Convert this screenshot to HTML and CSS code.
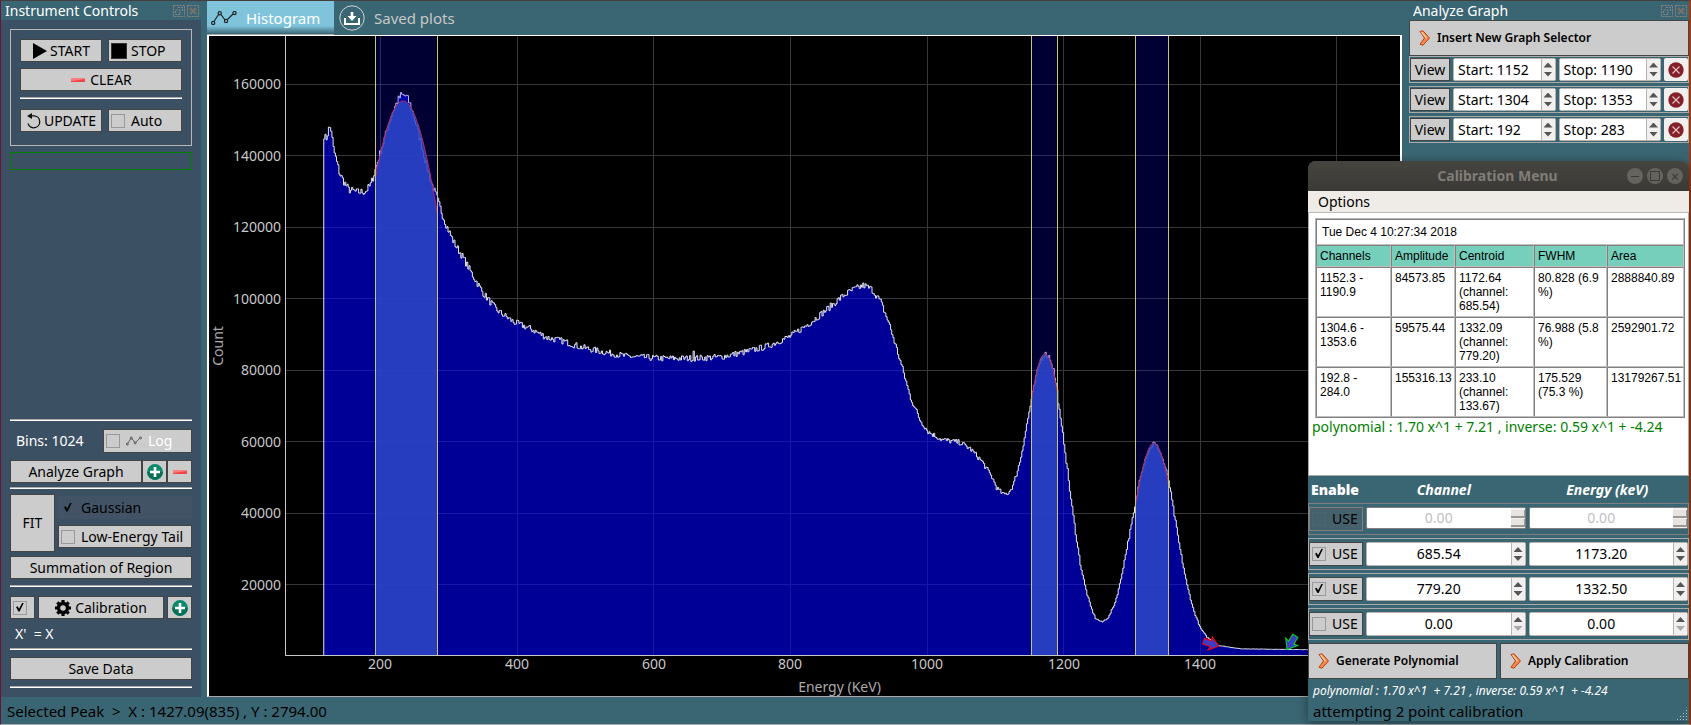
FILE: index.html
```
<!DOCTYPE html>
<html lang="en">
	<head>
		<meta charset="utf-8">
		<title>Histogram</title>
		<link rel="stylesheet" href="styles.css">
	</head>
	<body>
		<!-- icon sheet -->
		<svg class="sheet">
			<symbol id="i-play" viewBox="0 0 16 16"><path d="M1 0L15 8L1 16Z" fill="#000"/></symbol>
			<symbol id="i-stop" viewBox="0 0 16 16"><rect x="0.5" y="0.5" width="15" height="15" fill="#000" stroke="#333"/></symbol>
			<symbol id="i-minus" viewBox="0 0 16 16"><rect x="1" y="6" width="14" height="4" fill="#f04848"/><path d="M1 6H15V7L1 9Z" fill="#f98080"/></symbol>
			<symbol id="i-undo" viewBox="0 0 16 16"><path d="M5 2.8H8.5A6 6 0 1 1 2 10.5" fill="none" stroke="#111" stroke-width="1.3"/><path d="M6 0V6L1 3Z" fill="#111"/></symbol>
			<symbol id="i-plus" viewBox="0 0 16 16"><circle cx="8" cy="8" r="7.9" fill="#0b8a6b"/><path d="M0.1 8A7.9 7.9 0 0 0 15.9 8Z" fill="#087058"/><path d="M8 3V13M3 8H13" stroke="#fff" stroke-width="2.6"/></symbol>
			<symbol id="i-gear" viewBox="0 0 16 16"><circle cx="8" cy="8" r="4.5" fill="none" stroke="#000" stroke-width="3.4"/><path d="M8 0V3M8 13V16M0 8H3M13 8H16M2.3 2.3L4.4 4.4M11.6 11.6L13.7 13.7M2.3 13.7L4.4 11.6M11.6 4.4L13.7 2.3" stroke="#000" stroke-width="3.2"/></symbol>
			<symbol id="i-line" viewBox="0 0 26 14"><g fill="none" stroke="currentColor" stroke-width="1.2"><path d="M3 10.5L7.5 3.5M10 3.5L14 9M16.5 8.5L22 3"/><circle cx="2.2" cy="12" r="1.6"/><circle cx="8.7" cy="2.2" r="1.6"/><circle cx="15" cy="10" r="1.6"/><circle cx="23.5" cy="2" r="1.6"/></g></symbol>
			<symbol id="i-save" viewBox="0 0 26 26"><circle cx="13" cy="13" r="12.2" fill="none" stroke="#c8d6da"/><path d="M6 13V19H20V13" fill="none" stroke="#fff" stroke-width="2"/><path d="M11.7 7H14.3V11H17.5L13 16L8.5 11H11.7Z" fill="#fff"/></symbol>
			<symbol id="i-chevron" viewBox="0 0 12 16"><path d="M1 1.5L4 0.8L10.5 8L4 15.2L1 14.2L5.5 8Z" fill="#f58a4c" stroke="#c03c10"/><path d="M2.5 2L7.5 8" stroke="#fcd2a8" stroke-width="1.2"/></symbol>
			<symbol id="i-remove" viewBox="0 0 16 16"><circle cx="8" cy="8" r="7.7" fill="#842029"/><path d="M4.5 4.5L11.5 11.5M11.5 4.5L4.5 11.5" stroke="#e6c4c6" stroke-width="1.1"/></symbol>
			<symbol id="i-float" viewBox="0 0 12 12"><g fill="none" stroke="#8a8782" stroke-dasharray="2 1"><rect x="0.5" y="0.5" width="11" height="11"/><path d="M5 2.5H9.5V7M2.5 5H7V9.5H2.5Z"/></g></symbol>
			<symbol id="i-shut" viewBox="0 0 12 12"><rect x="0.5" y="0.5" width="11" height="11" fill="none" stroke="#8a8782" stroke-dasharray="2 1"/><path d="M3 3L9 9M9 3L3 9" stroke="#77716c" stroke-width="2.4"/></symbol>
		</svg>

		<div class="app">
			<div class="main">
				<aside class="dock controls">
					<header class="dock-title">
						<span>Instrument Controls</span>
						<button aria-label="Float"><svg><use href="#i-float"/></svg></button>
						<button aria-label="Close"><svg><use href="#i-shut"/></svg></button>
					</header>
					<div class="controls-body">
						<div class="box">
							<div class="row">
								<button class="btn half"><svg class="icon"><use href="#i-play"/></svg>START</button>
								<button class="btn stop"><svg class="icon"><use href="#i-stop"/></svg>STOP</button>
							</div>
							<button class="btn"><svg class="icon"><use href="#i-minus"/></svg>CLEAR</button>
							<hr>
							<div class="row update">
								<button class="btn half"><svg class="icon"><use href="#i-undo"/></svg>UPDATE</button>
								<label class="btn check"><input type="checkbox">Auto</label>
							</div>
						</div>
						<div class="progress"></div>

						<div class="lower">
							<hr>
							<div class="row bins">
								<span>Bins: 1024</span>
								<label class="btn check log"><input type="checkbox"><svg class="icon"><use href="#i-line"/></svg>Log</label>
							</div>
							<div class="row tight">
								<button class="btn">Analyze Graph</button>
								<button class="btn square" aria-label="Add region"><svg class="icon"><use href="#i-plus"/></svg></button>
								<button class="btn square" aria-label="Remove region"><svg class="icon"><use href="#i-minus"/></svg></button>
							</div>
							<hr>
							<div class="row fit">
								<button class="btn">FIT</button>
								<div class="stack">
									<label class="btn check off"><input type="checkbox" checked disabled>Gaussian</label>
									<label class="btn check"><input type="checkbox">Low-Energy Tail</label>
								</div>
							</div>
							<button class="btn">Summation of Region</button>
							<hr>
							<div class="row calib">
								<label class="btn check square"><input type="checkbox" checked aria-label="Use calibration"></label>
								<button class="btn"><svg class="icon"><use href="#i-gear"/></svg>Calibration</button>
								<button class="btn square" aria-label="Add calibration"><svg class="icon"><use href="#i-plus"/></svg></button>
							</div>
							<div class="formula">X' &nbsp;= X</div>
							<hr>
							<button class="btn">Save Data</button>
							<hr>
						</div>
					</div>
				</aside>

				<section class="center">
					<nav class="tabs">
						<button class="tab active"><svg class="line"><use href="#i-line"/></svg>Histogram</button>
						<button class="tab"><svg class="save"><use href="#i-save"/></svg>Saved plots</button>
					</nav>
					<div class="plot"><svg id="plot"></svg></div>
				</section>

				<aside class="dock analyze">
					<header class="dock-title">
						<span>Analyze Graph</span>
						<button aria-label="Float"><svg><use href="#i-float"/></svg></button>
						<button aria-label="Close"><svg><use href="#i-shut"/></svg></button>
					</header>
					<button class="cmd"><svg><use href="#i-chevron"/></svg>Insert New Graph Selector</button>
					<div class="selector">
						<button class="view">View</button>
						<div class="spin"><input type="text" value="Start: 1152" aria-label="Start 1"><span><button aria-label="Up"></button><button aria-label="Down"></button></span></div>
						<div class="spin"><input type="text" value="Stop: 1190" aria-label="Stop 1"><span><button aria-label="Up"></button><button aria-label="Down"></button></span></div>
						<button class="remove" aria-label="Remove"><svg><use href="#i-remove"/></svg></button>
					</div>
					<div class="selector">
						<button class="view">View</button>
						<div class="spin"><input type="text" value="Start: 1304" aria-label="Start 2"><span><button aria-label="Up"></button><button aria-label="Down"></button></span></div>
						<div class="spin"><input type="text" value="Stop: 1353" aria-label="Stop 2"><span><button aria-label="Up"></button><button aria-label="Down"></button></span></div>
						<button class="remove" aria-label="Remove"><svg><use href="#i-remove"/></svg></button>
					</div>
					<div class="selector">
						<button class="view">View</button>
						<div class="spin"><input type="text" value="Start: 192" aria-label="Start 3"><span><button aria-label="Up"></button><button aria-label="Down"></button></span></div>
						<div class="spin"><input type="text" value="Stop: 283" aria-label="Stop 3"><span><button aria-label="Up"></button><button aria-label="Down"></button></span></div>
						<button class="remove" aria-label="Remove"><svg><use href="#i-remove"/></svg></button>
					</div>
				</aside>
			</div>
			<footer class="status">Selected Peak &nbsp;&gt; &nbsp;X : 1427.09(835) , Y : 2794.00</footer>
		</div>

		<!-- floating calibration window -->
		<div class="window">
			<header class="window-title">
				<span>Calibration Menu</span>
				<button class="min" aria-label="Minimize"></button>
				<button class="max" aria-label="Maximize"></button>
				<button class="shut" aria-label="Close">×</button>
			</header>
			<nav class="menu"><button>Options</button></nav>
			<div class="report">
				<table>
					<tr class="date"><td colspan="5">Tue Dec 4 10:27:34 2018</td></tr>
					<tr><th class="c1">Channels</th><th class="c2">Amplitude</th><th class="c3">Centroid</th><th class="c4">FWHM</th><th>Area</th></tr>
					<tr><td>1152.3 - 1190.9</td><td>84573.85</td><td>1172.64 (channel: 685.54)</td><td>80.828 (6.9 %)</td><td>2888840.89</td></tr>
					<tr><td>1304.6 - 1353.6</td><td>59575.44</td><td>1332.09 (channel: 779.20)</td><td>76.988 (5.8 %)</td><td>2592901.72</td></tr>
					<tr><td>192.8 - 284.0</td><td>155316.13</td><td>233.10 (channel: 133.67)</td><td>175.529 (75.3 %)</td><td>13179267.51</td></tr>
				</table>
				<p>polynomial : 1.70 x^1 + 7.21 , inverse: 0.59 x^1 + -4.24</p>
			</div>
			<div class="points-head"><b>Enable</b><i>Channel</i><i>Energy (keV)</i></div>
			<div class="point disabled">
				<label class="btn check"><input type="checkbox" disabled>USE</label>
				<div class="spin"><input type="text" value="0.00" disabled aria-label="Channel 1"><span><button disabled aria-label="Up"></button><button disabled aria-label="Down"></button></span></div>
				<div class="spin"><input type="text" value="0.00" disabled aria-label="Energy 1"><span><button disabled aria-label="Up"></button><button disabled aria-label="Down"></button></span></div>
			</div>
			<div class="point">
				<label class="btn check"><input type="checkbox" checked>USE</label>
				<div class="spin"><input type="text" value="685.54" aria-label="Channel 2"><span><button aria-label="Up"></button><button aria-label="Down"></button></span></div>
				<div class="spin"><input type="text" value="1173.20" aria-label="Energy 2"><span><button aria-label="Up"></button><button aria-label="Down"></button></span></div>
			</div>
			<div class="point">
				<label class="btn check"><input type="checkbox" checked>USE</label>
				<div class="spin"><input type="text" value="779.20" aria-label="Channel 3"><span><button aria-label="Up"></button><button aria-label="Down"></button></span></div>
				<div class="spin"><input type="text" value="1332.50" aria-label="Energy 3"><span><button aria-label="Up"></button><button aria-label="Down"></button></span></div>
			</div>
			<div class="point">
				<label class="btn check"><input type="checkbox">USE</label>
				<div class="spin"><input type="text" value="0.00" aria-label="Channel 4"><span><button aria-label="Up"></button><button disabled aria-label="Down"></button></span></div>
				<div class="spin"><input type="text" value="0.00" aria-label="Energy 4"><span><button aria-label="Up"></button><button disabled aria-label="Down"></button></span></div>
			</div>
			<div class="cmds">
				<button class="cmd"><svg><use href="#i-chevron"/></svg>Generate Polynomial</button>
				<button class="cmd"><svg><use href="#i-chevron"/></svg>Apply Calibration</button>
			</div>
			<p class="poly">polynomial : 1.70 x^1 &nbsp;+ 7.21 , inverse: 0.59 x^1 &nbsp;+ -4.24</p>
			<p class="msg">attempting 2 point calibration</p>
			<div class="grip"></div>
		</div>

		<script src="plot.js"></script>
	</body>
</html>
```
FILE: styles.css
```
* {
	box-sizing: border-box;
}

body {
	margin: 0;
	font-family: "Noto Sans", "Open Sans", sans-serif;
	font-size: 14px;
	line-height: 18px;
	color: #000;
	background: #3a6673;
	overflow: hidden;
}

button, input {
	font: inherit;
	color: inherit;
	margin: 0;
	padding: 0;
	border: 0;
	background: none;
}

p {
	margin: 0;
}

.sheet {
	position: absolute;
	width: 0;
	height: 0;
}

.app {
	display: flex;
	flex-direction: column;
	height: 100vh;
	border-top: 1px solid #43403c;
	border-left: 1px solid #6a1238;
	border-right: 2px solid #a33812;
	border-bottom: 1px solid #a8a8a4;
}

.main {
	flex: 1;
	display: flex;
	min-height: 0;
}

.status {
	height: 27px;
	padding: 5px 6px;
	font-size: 15px;
}

/* docks */
.dock {
	display: flex;
	flex-direction: column;
}

.dock-title {
	display: flex;
	align-items: center;
	gap: 2px;
	height: 19px;
	padding: 0 2px 0 4px;
	color: #fff;
}

.dock-title span {
	flex: 1;
}

.dock-title button, .dock-title svg {
	display: block;
	width: 12px;
	height: 12px;
}

.controls {
	width: 200px;
}

.controls-body {
	flex: 1;
	display: flex;
	flex-direction: column;
	padding: 9px;
	background: #3c5064;
}

.box {
	height: 117px;
	padding: 9px;
	border: 1px solid #b8b8b8;
}

hr {
	height: 2px;
	margin: 0;
	border: 0;
	border-top: 1px solid #aaa;
	background: #fff;
}

.row {
	display: flex;
	gap: 6px;
}

.btn {
	display: flex;
	align-items: center;
	justify-content: center;
	gap: 4px;
	width: 100%;
	height: 23px;
	border: 1px solid #444;
	background: #ccc;
	white-space: nowrap;
}

.row .btn {
	flex: 1;
	width: auto;
}

.row .half {
	flex: none;
	width: 82px;
	gap: 2px;
}

.row .stop {
	justify-content: flex-start;
	padding-left: 2px;
}

.icon {
	flex: none;
	width: 16px;
	height: 16px;
}

.box > .btn {
	margin: 6px 0;
}

.update {
	margin-top: 10px;
}

.check {
	justify-content: flex-start;
	gap: 6px;
	padding-left: 2px;
}

.check input {
	appearance: none;
	flex: none;
	width: 14px;
	height: 14px;
	border: 1px solid #999;
}

.check input:checked::after {
	content: "";
	display: block;
	width: 8px;
	height: 9px;
	margin: 1px 2px;
	background: #000;
	clip-path: polygon(0 50%, 20% 42%, 38% 70%, 80% 0, 100% 0, 45% 100%, 30% 100%);
}

.progress {
	height: 18px;
	margin-top: 6px;
	border: 1px solid #008000;
}

.lower {
	margin-top: auto;
}

.bins {
	align-items: center;
	justify-content: space-between;
	margin: 8px 0 7px;
	padding-left: 6px;
	color: #fff;
}

.row .log {
	flex: none;
	width: 89px;
	height: 24px;
}

.log .icon {
	color: #333;
	height: 10px;
}

.row.tight {
	gap: 0;
	margin-bottom: 4px;
}

.row .square {
	flex: none;
	width: 25px;
}

.fit {
	gap: 3px;
	margin: 5px 0 4px;
}

.row.fit > .btn {
	flex: none;
	width: 45px;
	height: 58px;
}

.stack {
	flex: 1;
	display: flex;
	flex-direction: column;
	gap: 6px;
	padding-top: 2px;
}

.stack .btn {
	flex: none;
}

.check.off {
	border-color: transparent;
	background: #435366;
}

.off input {
	border-color: transparent;
}

.calib {
	gap: 3px;
	margin-top: 9px;
}

.formula {
	margin: 6px 0 5px 5px;
	color: #fff;
}

.lower > .btn {
	margin-bottom: 6px;
}

.formula + hr {
	margin-bottom: 7px;
}

/* centre */
.center {
	flex: 1;
	display: flex;
	flex-direction: column;
	min-width: 0;
	margin: 0 7px 0 6px;
}

.tabs {
	display: flex;
	height: 34px;
}

.tab {
	display: flex;
	align-items: center;
	gap: 9px;
	padding: 0 12px 0 5px;
	font-size: 15px;
	color: #c8c8c8;
}

.tab.active {
	width: 127px;
	padding: 0 0 0 4px;
	color: #fff;
	background: linear-gradient(#80c4dc 75%, #3a6673);
	border-bottom: 1px solid #aaa;
}

.line {
	width: 26px;
	height: 14px;
	color: #222;
}

.save {
	width: 26px;
	height: 26px;
}

.plot {
	flex: 1;
	min-height: 0;
	border: solid #fff;
	border-width: 1px 2px;
	border-bottom-color: #aaa;
	background: #000;
}

.plot svg {
	display: block;
	width: 100%;
	height: 100%;
}

.plot text {
	fill: #c8c8c8;
}

.plot .title {
	fill: #aaa;
}

/* analyze dock */
.analyze {
	width: 280px;
}

.cmd {
	display: flex;
	align-items: center;
	gap: 6px;
	flex: 1;
	height: 36px;
	padding-left: 9px;
	border: 1px solid #444;
	background: #ccc;
	font-size: 12px;
	font-weight: 600;
}

.cmd svg {
	width: 12px;
	height: 16px;
}

.analyze .cmd {
	flex: none;
}

.selector {
	display: flex;
	gap: 3px;
	height: 27px;
	margin-bottom: 3px;
	border: 1px solid #aaa;
	padding: 1px 0;
}

.view {
	width: 40px;
	border: 1px solid #444;
	background: #ccc;
}

.remove {
	display: grid;
	place-items: center;
	width: 24px;
	border-radius: 2px;
	background: #f2f0ee;
}

.remove svg {
	width: 16px;
	height: 16px;
}

.spin {
	flex: 1;
	display: flex;
	min-width: 0;
	border: 1px solid #b8b4b0;
	border-radius: 2px;
	background: #fff;
}

.spin input {
	flex: 1;
	min-width: 0;
	padding-left: 4px;
}

.spin span {
	display: flex;
	flex-direction: column;
	justify-content: center;
	gap: 4px;
	width: 14px;
	border-left: 1px solid #b8b4b0;
	background: #f2f0ee;
}

.spin button {
	height: 5px;
	margin: 0 2px;
	background: #555;
	clip-path: polygon(50% 0, 100% 100%, 0 100%);
}

.spin button + button {
	clip-path: polygon(0 0, 100% 0, 50% 100%);
}

.spin button:disabled {
	background: #aaa;
}

/* calibration window */
.window {
	position: absolute;
	top: 161px;
	right: 2px;
	bottom: 4px;
	display: flex;
	flex-direction: column;
	width: 381px;
	border-radius: 8px 8px 0 0;
	background: #3a6673;
	box-shadow: 0 2px 12px rgba(0, 0, 0, 0.4);
}

.window-title {
	display: flex;
	align-items: center;
	gap: 4px;
	height: 30px;
	padding-right: 6px;
	border-radius: 8px 8px 0 0;
	background: linear-gradient(#45443f, #3b3a36);
	color: #807d78;
	font-weight: bold;
}

.window-title span {
	flex: 1;
	padding-left: 64px;
	text-align: center;
}

.window-title button {
	display: grid;
	place-items: center;
	width: 16px;
	height: 16px;
	border-radius: 50%;
	background: #65635e;
	color: #3b3a36;
	font-weight: normal;
}

.min::after {
	content: "";
	width: 8px;
	height: 1px;
	background: #3b3a36;
}

.max::after {
	content: "";
	width: 8px;
	height: 8px;
	border: 1px solid #3b3a36;
}

.menu {
	height: 22px;
	padding: 2px 10px;
	border-bottom: 1px solid #bbb;
	background: #efebe7;
}

.report {
	flex: 1;
	min-height: 0;
	padding: 5px 3px 0 6px;
	border: 1px solid #aaa;
	border-top: 0;
	background: #fff;
}

.report table {
	width: 100%;
	border-spacing: 0;
	border: 1px solid #808080;
	border-color: #b4b4b4 #808080 #808080 #b4b4b4;
	font: 12px/14px "Liberation Sans", sans-serif;
}

.report td, .report th {
	padding: 3px;
	border: 1px solid #808080;
	border-right-color: #c0c0c0;
	border-bottom-color: #c0c0c0;
	text-align: left;
	vertical-align: top;
	font-weight: normal;
}

.report .date td {
	padding: 5px;
}

.report tr + tr td {
	padding: 3px 0 3px 3px;
}

.report th {
	background: #76cfbb;
}

.c1 { width: 75px; }
.c2 { width: 64px; }
.c3 { width: 79px; }
.c4 { width: 73px; }

.report p {
	margin: 0 -3px;
	color: #008000;
	white-space: nowrap;
}

.points-head {
	display: grid;
	grid-template-columns: 54px 1fr 1fr;
	align-items: center;
	height: 27px;
	color: #fff;
	font-weight: bold;
	text-align: center;
}

.point {
	display: flex;
	gap: 3px;
	height: 32px;
	margin-bottom: 3px;
	padding: 3px 0;
	border: 1px solid #aaa;
}

.point .btn {
	flex: none;
	width: 54px;
	height: 24px;
}

.point .spin input {
	text-align: center;
	padding: 0;
}

.point.disabled {
	border-color: #808080;
}

.disabled .btn {
	border-color: #808080;
	background: #45616b;
}

.disabled .btn input {
	border-color: #4c6670;
}

.disabled .spin {
	height: 22px;
	border-color: #808080;
	color: #c0c0c0;
}

.disabled .spin span {
	gap: 1px;
	border: 0;
}

.disabled .spin button, .disabled .spin button + button {
	height: 8px;
	margin: 0;
	border: 1px solid #999;
	border-width: 0 1px 2px 0;
	background: #e6e3e0;
	clip-path: none;
}

.cmds {
	display: flex;
	gap: 3px;
}

.poly {
	margin: 3px 5px 0;
	color: #fff;
	font-size: 12px;
	font-style: italic;
}

.msg {
	margin: 2px 5px 1px;
	font-size: 15px;
}

.grip {
	position: absolute;
	right: 1px;
	bottom: 1px;
	width: 12px;
	height: 14px;
	background: radial-gradient(circle, #b8c4c8 1px, transparent 1px) 0 0 / 3px 3px;
	clip-path: polygon(100% 0, 100% 100%, 0 100%);
}
```
FILE: plot.js
```
// spectrum outline: energy (keV), count
var spectrum = [
	[116.9, 145900], [119.8, 144500], [124.6, 148070], [127.6, 147100], [130, 142460],
	[134.9, 138700], [139.7, 135000], [145.6, 132860], [152.9, 130500], [165.2, 129800],
	[177.3, 130000], [184.6, 131700], [189.5, 134500], [194.4, 137800], [201.8, 142500],
	[209, 147140], [216.4, 151800], [223.7, 155060], [229.6, 156940], [237.3, 156660],
	[243.2, 154140], [250.5, 149460], [257.8, 144340], [265.1, 138740], [272.5, 133140],
	[282.3, 128000], [289.6, 123800], [296.9, 120060], [306.5, 115860], [321.2, 111200],
	[335.8, 106060], [350.4, 101400], [370, 96740], [394.4, 93460], [418.8, 91600],
	[443.2, 89100], [467.5, 88060], [492, 86460], [526, 85060], [560, 83860],
	[609, 83300], [657.8, 83300], [696.8, 83660], [735.9, 85180], [765.2, 86660],
	[799.3, 89460], [828.6, 93300], [853, 97020], [877.3, 100940], [891.9, 102540],
	[906.6, 103740], [918.9, 102540], [931, 99340], [943.1, 93460], [950.5, 88800],
	[962.8, 80860], [974.9, 72460], [989.5, 65940], [1001.7, 62660], [1021.3, 60540],
	[1048.1, 59700], [1062.7, 58000], [1079.8, 54460], [1094.4, 50060], [1101.7, 46980],
	[1111.4, 45140], [1118.7, 45700], [1126, 48020], [1135.9, 54740], [1145.7, 65000],
	[1153, 72460], [1160.3, 79000], [1165.2, 82740], [1171, 84600], [1178.8, 83660],
	[1184.7, 79940], [1189.6, 74340], [1194.4, 66400], [1200.3, 59400], [1209, 45400],
	[1216.4, 35140], [1223.7, 25800], [1231, 19260], [1238.3, 14140], [1245.7, 10580],
	[1255.4, 9460], [1265.2, 10860], [1274.9, 15060], [1282.3, 20660], [1292, 30460],
	[1299.4, 37460], [1305.7, 43540], [1311.5, 50540], [1321.3, 56600], [1331, 59600],
	[1338.3, 58000], [1345.7, 54260], [1353, 49140], [1360.3, 40740], [1370, 29540],
	[1380, 19740], [1389.6, 12740], [1399.3, 7900], [1409, 5260], [1426, 2940],
	[1458, 2016], [1531, 1820], [1694, 1500]
];

// fitted peaks
var fits = [
	{ from: 192.8, to: 283.5, mean: 233.1, amp: 155316, fwhm: 175.5 },
	{ from: 1152.3, to: 1190.9, mean: 1172.64, amp: 84574, fwhm: 80.8 },
	{ from: 1304.6, to: 1353.6, mean: 1332.09, amp: 59575, fwhm: 77 }
];

var xMin = 61, xMax = 1693, yMax = 173500;
var left = 76, bottom = 40;

function draw() {
	var svg = document.getElementById("plot");
	var w = svg.clientWidth, h = svg.clientHeight;
	var base = h - bottom;
	var out = "";

	function X(v) { return left + 0.5 + (v - xMin) / (xMax - xMin) * (w - left); }
	function Y(v) { return base - v / yMax * base; }
	function snap(v) { return Math.floor(v) + 0.5; }
	function line(x1, y1, x2, y2, color) {
		out += `<path d="M${x1} ${y1}L${x2} ${y2}" stroke="${color}"/>`;
	}

	// grid and tick labels
	for (var c = 20000; c <= 160000; c += 20000) {
		line(left, snap(Y(c)), w, snap(Y(c)), "#383838");
		out += `<text x="${left - 4}" y="${Math.round(Y(c)) + 5}" text-anchor="end">${c}</text>`;
	}
	for (var e = 200; e <= 1600; e += 200) {
		line(snap(X(e)), 0, snap(X(e)), base, "#383838");
		if (e < 1600) out += `<text x="${Math.round(X(e))}" y="${base + 13}" text-anchor="middle">${e}</text>`;
	}

	// one step per channel, with counting noise
	var path = "", k = 0, seed = 7;
	for (var ch = 117; ch < xMax; ch += 1.7) {
		while (k < spectrum.length - 2 && spectrum[k + 1][0] < ch) k++;
		var a = spectrum[k], b = spectrum[k + 1];
		var v = a[1] + (b[1] - a[1]) * (ch - a[0]) / (b[0] - a[0]);
		seed = (seed * 16807) % 2147483647;
		v += (seed / 2147483647 - 0.5) * Math.min(Math.sqrt(v) * 6, v / 25);
		if (Math.abs(ch - 657.6) < 0.85) v += 2200;
		path += `V${Y(v).toFixed(1)}H${X(ch + 1.7).toFixed(1)}`;
	}
	out += `<path d="M${X(117)} ${base}${path}V${base}Z" fill="rgba(0,0,255,0.59)"/>`;
	out += `<path d="M${X(117)} ${base}${path}" fill="none" stroke="#e4e4f0"/>`;

	// selected regions
	fits.forEach(function (f) {
		var s = f.fwhm / 2.355, g = "";
		for (var i = 0; i <= 40; i++) {
			var x = f.from + (f.to - f.from) * i / 40;
			var y = f.amp * Math.exp(-Math.pow((x - f.mean) / s, 2) / 2);
			g += (i ? "L" : "M") + X(x).toFixed(1) + " " + Y(y).toFixed(1);
		}
		out += `<rect x="${X(f.from)}" y="0" width="${X(f.to) - X(f.from)}" height="${base}" fill="rgba(0,0,255,0.2)"/>`;
		out += `<path d="${g}V${base}H${X(f.from)}Z" fill="rgba(46,74,196,0.82)"/>`;
		out += `<path d="${g}" fill="none" stroke="#b8285c"/>`;
		line(snap(X(f.from)), 0, snap(X(f.from)), base, "#c8c864");
		line(snap(X(f.to)), 0, snap(X(f.to)), base, "#c8c864");
	});

	// axes
	line(left + 0.5, 0, left + 0.5, base, "#c8c8c8");
	line(left, base - 0.5, w, base - 0.5, "#c8c8c8");
	out += `<text class="title" x="${(left + w) / 2 - 3}" y="${base + 36}" text-anchor="middle">Energy (KeV)</text>`;
	out += `<text class="title" transform="translate(14 ${base / 2}) rotate(-90)" text-anchor="middle">Count</text>`;

	// cursors
	var arrow = "M0 0L-9 -7L-8 -3H-16V3H-8L-9 7Z";
	out += `<path d="${arrow}" transform="translate(${X(1427)} ${Y(2794)}) rotate(17)" fill="#3c3cc8" stroke="red"/>`;
	out += `<path d="${arrow}" transform="translate(${X(1527)} ${Y(1800)}) rotate(121)" fill="#3c3cc8" stroke="#00e020"/>`;

	svg.innerHTML = out;
}

draw();
window.addEventListener("resize", draw);
```
